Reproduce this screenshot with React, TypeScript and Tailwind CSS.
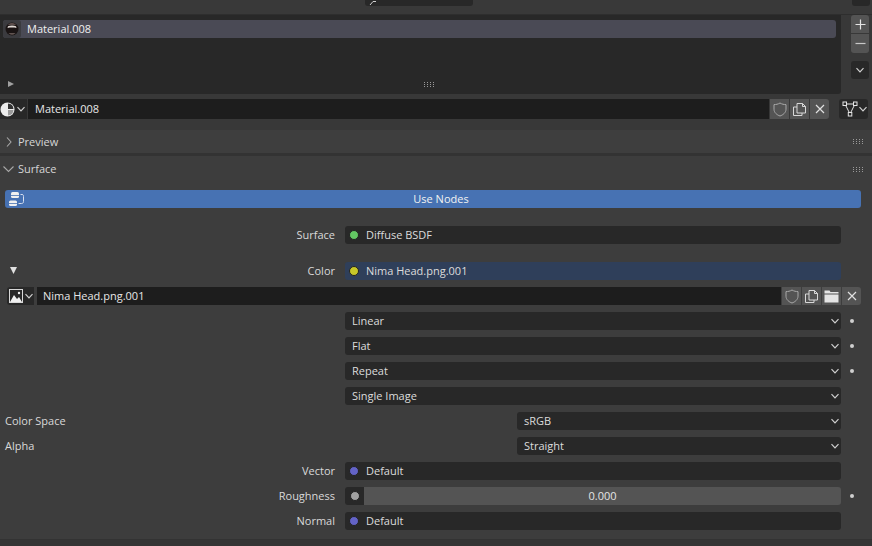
import React from 'react';

const Grip = () => (
  <div className="grid grid-cols-4 gap-x-[2px] gap-y-[1px]">
    {Array.from({ length: 12 }).map((_, i) => (
      <div key={i} className="w-[1px] h-[1px] bg-[#9a9a9a]" />
    ))}
  </div>
);

const Chevron = ({ className = '' }: { className?: string }) => (
  <svg width="10" height="10" viewBox="0 0 10 10" className={className} fill="none" stroke="#d0d0d0" strokeWidth="1.2">
    <path d="M1.5 3.2 5 6.8 8.5 3.2" />
  </svg>
);

const Shield = () => (
  <svg width="14" height="15" viewBox="0 0 14 15" fill="none" stroke="#a8a8a8" strokeWidth="1">
    <path d="M7 1C5 2.2 3 2.600 1 2.600v4.600C1 10.600 4 13 7 14c3-1 6-3.400 6-6.800V2.600C11 2.600 9 2.200 7 1Z" />
  </svg>
);

const Copy = () => (
  <svg width="15" height="15" viewBox="0 0 15 15" fill="none" stroke="#d8d8d8" strokeWidth="1">
    <path d="M5 11V1.500h5.500L13.500 4.500V11Z" />
    <path d="M10.500 1.500v3h3" />
    <path d="M5 5H1.500v8.500H10V11" />
  </svg>
);

const Close = () => (
  <svg width="10" height="10" viewBox="0 0 10 10" fill="none" stroke="#e0e0e0" strokeWidth="1.2">
    <path d="M1 1 9 9M9 1 1 9" />
  </svg>
);

const Folder = () => (
  <svg width="15" height="13" viewBox="0 0 15 13" fill="#e4e4e4">
    <path d="M0.500 0.500h5l1 1.500h8v1.500H0.500Z" />
    <path d="M0.500 4.500h14v8h-14Z" />
  </svg>
);

const IconButton = ({ children, rounded = '' }: { children: React.ReactNode; rounded?: string }) => (
  <div className={`w-[19px] h-full bg-[#545454] flex items-center justify-center ${rounded}`}>{children}</div>
);

const Socket = ({ color }: { color: string }) => (
  <div className={`w-[10px] h-[10px] rounded-full border border-[#222222] shrink-0 ${color}`} />
);

// label column is 345px, the field runs to x=841, decorator dot sits at x=852
const PropRow = ({
  label,
  children,
  dot = false,
  className = 'mt-[7px]',
}: {
  label?: string;
  children: React.ReactNode;
  dot?: boolean;
  className?: string;
}) => (
  <div className={`flex h-[18px] items-center ${className}`}>
    <div className="w-[345px] pr-[10px] text-right text-[#d9d9d9]">{label}</div>
    <div className="w-[496px] h-full">{children}</div>
    {dot && <div className="ml-[9px] w-[4px] h-[4px] rounded-full bg-[#cfcfcf]" />}
  </div>
);

const SocketField = ({ color, text, bg = 'bg-[#282828]' }: { color: string; text: string; bg?: string }) => (
  <div className={`h-full rounded-[3px] ${bg} flex items-center pl-[4px] gap-[7px] text-[#dcdcdc]`}>
    <Socket color={color} />
    <span>{text}</span>
  </div>
);

const Select = ({ text }: { text: string }) => (
  <div className="h-full rounded-[3px] bg-[#282828] flex items-center justify-between pl-[7px] pr-[1px] text-[#dcdcdc]">
    <span>{text}</span>
    <Chevron />
  </div>
);

const AlignedSelect = ({ label, text }: { label: string; text: string }) => (
  <div className="flex h-[18px] items-center mt-[7px]">
    <div className="w-[517px] pl-[5px] text-[#d9d9d9]">{label}</div>
    <div className="w-[324px] h-full">
      <Select text={text} />
    </div>
  </div>
);

const MaterialIcon = () => (
  <svg width="15" height="15" viewBox="0 0 15 15" className="shrink-0">
    <circle cx="7.500" cy="7.500" r="7" fill="#ececec" />
    <path d="M8 7V1.500A6 6 0 0 1 13.500 7Z" fill="#333333" />
    <path d="M8 8H13.500A6 6 0 0 1 8 13.500Z" fill="#9a9a9a" />
  </svg>
);

const Thumb = () => (
  <div className="w-[18px] h-[18px] rounded-[3px] bg-[#3b3b3f] flex items-center justify-center">
    <svg width="14" height="14" viewBox="0 0 14 14">
      <circle cx="7" cy="7" r="6.500" fill="#1a1414" />
      <path d="M3 3C4 1.500 5.500 1 7 1S10 1.500 11 3Z" fill="#5a4c4a" />
      <path d="M3 4.200C5 3.400 9 3.400 11 4.200L11.500 6C9 5.400 5 5.400 2.500 6Z" fill="#e0d8d4" />
      <path d="M3.500 11.200c2 1.800 5 1.800 7 0Z" fill="#7a6a66" />
    </svg>
  </div>
);

const App: React.FC = () => {
  return (
    <div
      className="w-[872px] h-[546px] overflow-hidden bg-[#3d3d3d] text-[11px] leading-[10px] text-[#dcdcdc]"
      style={{ fontFamily: '"Open Sans", sans-serif' }}
    >
      {/* top of the region, cut off by the window */}
      <div className="h-[15px] bg-[#393939] border-b border-[#2e2e2e] flex items-start">
        <div className="ml-[365px] w-[108px] h-[6px] bg-[#282828] rounded-b-[3px] pl-[4px]">
          <svg width="8" height="5" viewBox="0 0 8 5" fill="none" stroke="#d0d0d0" strokeWidth="1">
            <path d="M1 5 4 1.500H7" />
          </svg>
        </div>
        <div className="ml-[379px] w-[18px] h-[6px] bg-[#282828] rounded-b-[3px]" />
      </div>

      {/* material slots */}
      <div className="h-[115px] bg-[#383838]">
        <div className="flex h-[79px]">
          <div className="w-[841px] h-full bg-[#282828] rounded-br-[3px] flex flex-col pt-[5px]">
            <div className="ml-[3px] w-[833px] h-[18px] rounded-[3px] bg-[#4a4a55] flex items-center gap-[6px] text-[#f0f0f0]">
              <Thumb />
              <span>Material.008</span>
            </div>
            <div className="mt-auto mb-[7px] flex items-center">
              <div className="pl-[8px] w-[424px]">
                <svg width="6" height="6" viewBox="0 0 6 6">
                  <path d="M0 0 6 3 0 6Z" fill="#a0a0a0" />
                </svg>
              </div>
              <Grip />
            </div>
          </div>
          <div className="ml-[10px] w-[18px] flex flex-col">
            <div className="h-[18px] bg-[#545454] rounded-t-[3px] flex items-center justify-center">
              <svg width="11" height="11" viewBox="0 0 11 11" stroke="#e4e4e4" strokeWidth="1.200">
                <path d="M5.500 0.500v10M0.500 5.500h10" />
              </svg>
            </div>
            <div className="mt-[1px] h-[19px] bg-[#545454] rounded-b-[3px] flex items-center justify-center">
              <svg width="11" height="11" viewBox="0 0 11 11" stroke="#c8c8c8" strokeWidth="1.200">
                <path d="M0.500 5.500h10" />
              </svg>
            </div>
            <div className="mt-[8px] h-[18px] bg-[#282828] rounded-[3px] flex items-center justify-center">
              <Chevron />
            </div>
          </div>
        </div>

        <div className="flex h-[20px] mt-[5px]">
          <div className="w-[27px] h-full bg-[#282828] flex items-center gap-[1px]">
            <MaterialIcon />
            <Chevron className="shrink-0" />
          </div>
          <div className="ml-[1px] w-[741px] h-full bg-[#1d1d1d] flex items-center pl-[7px] text-[#e6e6e6]">Material.008</div>
          <div className="ml-[1px] flex h-full gap-[1px]">
            <IconButton><Shield /></IconButton>
            <IconButton><Copy /></IconButton>
            <IconButton rounded="rounded-r-[3px]"><Close /></IconButton>
          </div>
          <div className="ml-[10px] w-[29px] h-full bg-[#282828] rounded-[3px] flex items-center">
            <svg width="16" height="16" viewBox="0 0 16 16" className="ml-[3px] shrink-0" fill="#282828" stroke="#e4e4e4" strokeWidth="1">
              <path d="M3 3H13L8 13Z" />
              <rect x="1" y="1" width="3.500" height="3.500" />
              <rect x="11.500" y="1" width="3.500" height="3.500" />
              <rect x="6.300" y="11.500" width="3.500" height="3.500" />
            </svg>
            <Chevron className="shrink-0" />
          </div>
        </div>
      </div>

      {/* preview */}
      <div className="h-[23px] bg-[#3e3e3e] flex items-center justify-between pr-[9px]">
        <div className="flex items-center text-[#d6d6d6]">
          <svg width="18" height="12" viewBox="0 0 18 12" fill="none" stroke="#a8a8a8" strokeWidth="1.100">
            <path d="M7 1.500 11 6 7 10.500" />
          </svg>
          <span>Preview</span>
        </div>
        <Grip />
      </div>
      <div className="h-[3px] bg-[#333333]" />

      {/* surface */}
      <div className="h-[26px] flex items-center justify-between pr-[9px]">
        <div className="flex items-center text-[#d6d6d6]">
          <svg width="18" height="12" viewBox="0 0 18 12" fill="none" stroke="#a8a8a8" strokeWidth="1.100">
            <path d="M3.500 3.500 8.500 8.500 13.500 3.500" />
          </svg>
          <span>Surface</span>
        </div>
        <Grip />
      </div>

      <div className="mt-[8px] ml-[5px] w-[856px] h-[18px] rounded-[3px] bg-[#4772b3] relative flex items-center justify-center pl-[16px] text-[#f2f2f2]">
        <svg width="18" height="16" viewBox="0 0 18 16" className="absolute left-[3px] top-[1px]">
          <rect x="3" y="1" width="8" height="6" rx="1.500" fill="#f0f0f0" />
          <path d="M3 4.500h8" stroke="#4772b3" strokeWidth="0.800" />
          <rect x="1" y="9.500" width="8" height="5.500" rx="1.500" fill="#f0f0f0" />
          <path d="M1 12.500h8" stroke="#4772b3" strokeWidth="0.800" />
          <path d="M12.500 3.500h1.500c1.500 0 1.500 1 1.500 2v5c0 1.500-1 2-2 2H10.500" fill="none" stroke="#d8e0f0" strokeWidth="1" />
        </svg>
        Use Nodes
      </div>

      <PropRow label="Surface" className="mt-[18px]">
        <SocketField color="bg-[#63c763]" text="Diffuse BSDF" />
      </PropRow>

      <div className="relative pt-[18px]">
        <svg width="7" height="7" viewBox="0 0 7 7" className="absolute left-[10px] top-[23px]">
          <path d="M0 0H7L3.500 7Z" fill="#e0e0e0" />
        </svg>
        <PropRow label="Color" className="">
          <SocketField color="bg-[#c7c729]" text="Nima Head.png.001" bg="bg-[#2f3f5a]" />
        </PropRow>
      </div>

      <div className="flex h-[18px] mt-[7px] ml-[7px]">
        <div className="w-[27px] h-full bg-[#282828] rounded-l-[3px] flex items-center pl-[2px] gap-[1px]">
          <svg width="14" height="14" viewBox="0 0 14 14" className="shrink-0">
            <rect x="0.500" y="0.500" width="13" height="13" fill="none" stroke="#d8d8d8" />
            <path d="M1 13 5 6l3 4 2-2 3 5Z" fill="#f0f0f0" />
            <circle cx="10" cy="4" r="1.200" fill="#f0f0f0" />
          </svg>
          <Chevron className="shrink-0" />
        </div>
        <div className="ml-[3px] w-[744px] h-full bg-[#1d1d1d] flex items-center pl-[6px] text-[#e6e6e6]">Nima Head.png.001</div>
        <div className="ml-[1px] flex h-full gap-[1px]">
          <IconButton><Shield /></IconButton>
          <IconButton><Copy /></IconButton>
          <IconButton><Folder /></IconButton>
          <IconButton rounded="rounded-r-[3px]"><Close /></IconButton>
        </div>
      </div>

      <PropRow dot><Select text="Linear" /></PropRow>
      <PropRow dot><Select text="Flat" /></PropRow>
      <PropRow dot><Select text="Repeat" /></PropRow>
      <PropRow><Select text="Single Image" /></PropRow>
      <AlignedSelect label="Color Space" text="sRGB" />
      <AlignedSelect label="Alpha" text="Straight" />
      <PropRow label="Vector"><SocketField color="bg-[#6363c7]" text="Default" /></PropRow>
      <PropRow label="Roughness" dot>
        <div className="h-full flex rounded-[3px] overflow-hidden">
          <div className="w-[19px] h-full bg-[#282828] flex items-center justify-center">
            <Socket color="bg-[#a1a1a1]" />
          </div>
          <div className="flex-1 h-full bg-[#545454] flex items-center justify-center text-[#e4e4e4]">0.000</div>
        </div>
      </PropRow>
      <PropRow label="Normal"><SocketField color="bg-[#6363c7]" text="Default" /></PropRow>

      <div className="mt-[9px] h-[7px] border-t border-[#333333] bg-[#353535]" />
    </div>
  );
};

export default App;
